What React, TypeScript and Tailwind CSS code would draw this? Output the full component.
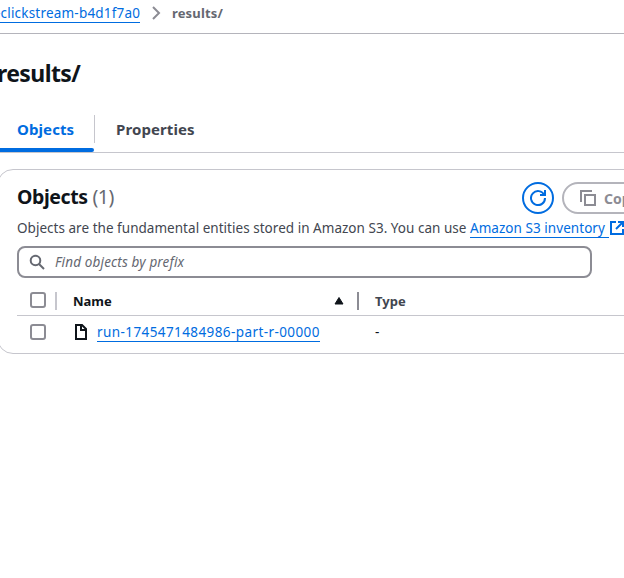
import type { ReactNode } from "react";

function Link({ children, className = "" }: { children: ReactNode; className?: string }) {
  return (
    <a className={`block h-5 whitespace-nowrap border-b border-[#006ce0] text-[#006ce0] ${className}`}>
      {children}
    </a>
  );
}

function Checkbox() {
  return <span className="block size-4 shrink-0 rounded-[3px] border-2 border-[#8c8c94] bg-white" />;
}

function Breadcrumbs() {
  return (
    <nav className="flex h-[34px] items-start border-b border-[#b4b4bb] pt-[3px] text-[13.5px] leading-5">
      <Link className="-ml-[4px] w-[144px] tracking-[0.2px]">-clickstream-b4d1f7a0</Link>
      <svg className="mt-0.5 ml-2 size-4" viewBox="0 0 16 16" fill="none" stroke="#8c8c94" strokeWidth="2">
        <path d="M5 2l6 6-6 6" />
      </svg>
      <span className="ml-2 text-[13px] font-bold tracking-[0.15px] text-[#656871]">results/</span>
    </nav>
  );
}

function Tabs() {
  return (
    <div className="flex h-[49px] border-b border-[#c6c6cd] text-[15px] font-bold leading-5">
      <div className="flex w-[94px] flex-col justify-between">
        <span className="pt-[15px] pl-[17px] tracking-[0.1px] text-[#006ce0]">Objects</span>
        <span className="h-1 rounded-r-full bg-[#006ce0]" />
      </div>
      <span className="mt-[11px] h-7 w-px bg-[#c6c6cd]" />
      <span className="pt-[15px] pl-[21px] tracking-[0.1px] text-[#424650]">Properties</span>
    </div>
  );
}

function CardHeader() {
  return (
    <header className="flex h-11 items-start pt-3 pl-[19px]">
      <h2 className="w-[505px] shrink-0 whitespace-nowrap text-[19.5px] font-bold leading-[30px] tracking-[-0.4px] text-[#0f141a]">
        Objects <span className="font-normal text-[#656871]">(1)</span>
      </h2>
      <button className="flex size-8 shrink-0 items-center justify-center rounded-full border-2 border-[#006ce0]">
        <svg className="size-4" viewBox="0 0 16 16" fill="none" stroke="#006ce0" strokeWidth="2">
          <path d="M15 8a7 7 0 1 1-.7-3" />
          <path d="M10 5h5V0" />
        </svg>
      </button>
      <button className="ml-2 flex h-8 w-[150px] shrink-0 items-center rounded-full border-2 border-[#b4b4bb] pl-4 text-[14px] font-bold text-[#8c8c94]">
        <svg className="size-4" viewBox="0 0 16 16" fill="none" stroke="#8c8c94" strokeWidth="2">
          <path d="M1 12V1h11" />
          <path d="M5 5h10v10H5z" />
        </svg>
        <span className="ml-2">Copy S3 URI</span>
      </button>
    </header>
  );
}

export default function App() {
  return (
    <main className="h-[578px] overflow-hidden bg-white font-['Noto_Sans','Open_Sans',sans-serif] text-[#0f141a]">
      <Breadcrumbs />
      <h1 className="-ml-[3px] h-[70px] pt-[24px] text-[23px] font-bold leading-[30px] tracking-[-0.6px]">results/</h1>
      <Tabs />
      <section className="mt-4 -ml-[3px] h-[185px] w-[900px] rounded-2xl border border-[#c6c6cd]">
        <CardHeader />
        <p className="ml-[19px] flex h-8 pt-1 text-[13.5px] leading-5 text-[#424650]">
          <span className="w-[453px] whitespace-nowrap tracking-[0.03px]">
            Objects are the fundamental entities stored in Amazon S3. You can use
          </span>
          <Link className="w-[139px] tracking-[0.05px]">Amazon S3 inventory</Link>
          <svg className="mt-0.5 size-4" viewBox="0 0 16 16" fill="none" stroke="#006ce0" strokeWidth="2">
            <path d="M7 2H2v12h12V9" />
            <path d="M9 2h5v5M14 2L7 9" />
          </svg>
        </p>
        <div className="ml-[19px] flex h-8 w-[575px] items-center rounded-lg border-2 border-[#8c8c94] pl-2.5">
          <svg className="size-4" viewBox="0 0 16 16" fill="none" stroke="#656871" strokeWidth="2">
            <circle cx="6.5" cy="6.5" r="4.8" />
            <path d="M10 10l5 5" />
          </svg>
          <span className="ml-2.5 text-[13.5px] italic tracking-[0.15px] text-[#656871]">Find objects by prefix</span>
        </div>
        <div className="ml-[19px] flex h-[38px] items-start border-b border-[#c6c6cd] pt-3.5 pl-[13px] text-[13px] font-bold leading-5">
          <Checkbox />
          <span className="ml-[9px] h-[18px] w-0.5 bg-[#c6c6cd]" />
          <span className="-mt-px ml-4 w-[260px]">Name</span>
          <svg className="mt-1 h-2.5 w-3" viewBox="0 0 12 10">
            <path d="M6 1.5l4 6.5H2z" fill="#0f141a" stroke="#0f141a" strokeWidth="1" strokeLinejoin="round" />
          </svg>
          <span className="ml-3 h-[18px] w-0.5 bg-[#8c8c94]" />
          <span className="-mt-px ml-4 text-[#424650]">Type</span>
        </div>
        <div className="ml-8 flex h-9 items-start pt-1.5 text-[13.5px] leading-5">
          <span className="pt-0.5">
            <Checkbox />
          </span>
          <svg className="mt-0.5 ml-[27px] size-4" viewBox="0 0 16 16" fill="none" stroke="#0f141a" strokeWidth="2">
            <path d="M3 1h6l4 4v10H3z" />
            <path d="M8 1v5h5" />
          </svg>
          <Link className="ml-2 w-[223px] tracking-[0.41px]">run-1745471484986-part-r-00000</Link>
          <span className="ml-[55px]">-</span>
        </div>
      </section>
    </main>
  );
}
